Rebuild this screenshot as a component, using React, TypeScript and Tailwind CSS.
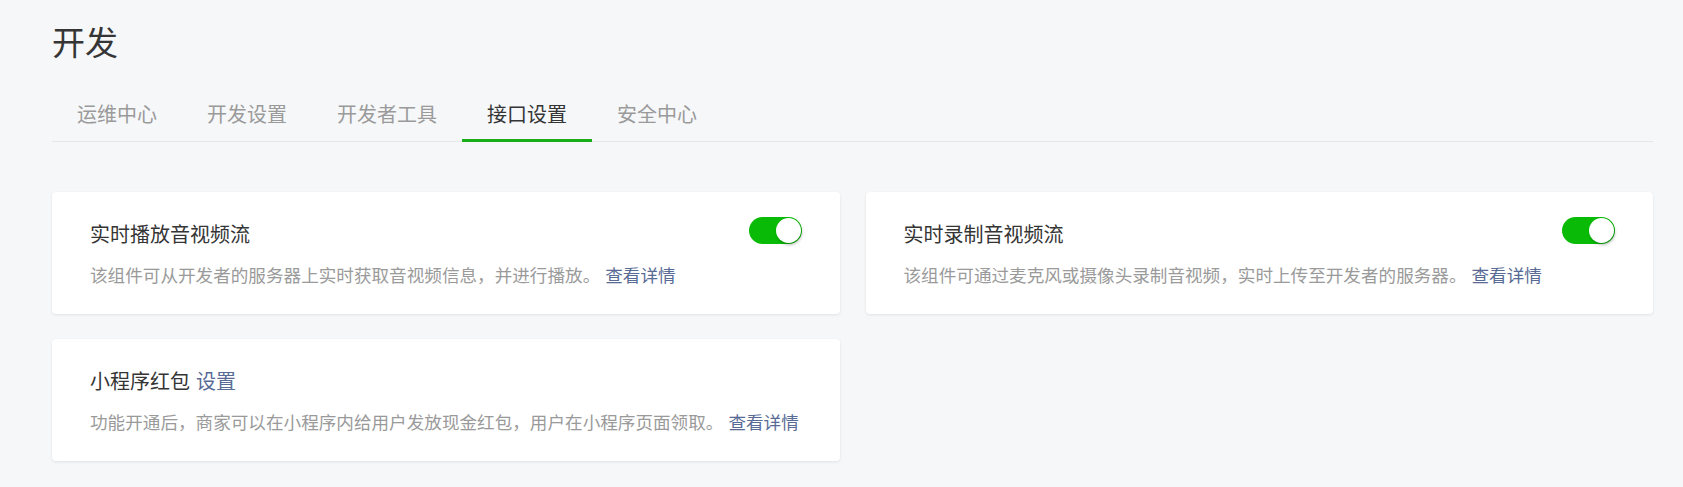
import React from "react";

const FONT = '"Microsoft YaHei", "Noto Sans CJK SC", "Noto Sans", sans-serif';

function Toggle() {
  return (
    <div className="-mt-[3px] flex h-[27px] w-[53px] shrink-0 items-center justify-end rounded-full bg-[#09bb07] p-px">
      <div className="h-[25px] w-[25px] rounded-full bg-white shadow-[1px_2px_3px_rgba(0,0,0,0.25)]" />
    </div>
  );
}

function Card({
  title,
  desc,
  toggle,
  titleLink,
}: {
  title: string;
  desc: string;
  toggle?: boolean;
  titleLink?: string;
}) {
  return (
    <div className="rounded-[4px] bg-white px-[38px] pb-[26px] pt-[28px] shadow-[0_1px_3px_rgba(0,0,0,0.09)]">
      <div className="flex items-start justify-between">
        <div className="text-[20px] leading-[28px] text-[#353535]">
          {title}
          {titleLink && <a className="ml-[6px] text-[#576b95]">{titleLink}</a>}
        </div>
        {toggle && <Toggle />}
      </div>
      <div className="mt-[14px] text-[17.6px] leading-[26px] text-[#9a9a9a]">
        {desc}
        <a className="ml-[5px] text-[#576b95]">查看详情</a>
      </div>
    </div>
  );
}

export default function App() {
  const tabs = ["运维中心", "开发设置", "开发者工具", "接口设置", "安全中心"];
  return (
    <div
      className="min-h-[487px] w-full bg-[#f6f7f9] pb-[25px] pl-[52px] pr-[30px] pt-[19px]"
      style={{ fontFamily: FONT }}
    >
      <h1 className="text-[33px] font-normal leading-[44px] text-[#353535]">开发</h1>
      <div className="mt-[37px] flex border-b border-[#e7e7eb]">
        {tabs.map((t) => {
          const active = t === "接口设置";
          return (
            <div
              key={t}
              className={
                active
                  ? "-mb-px border-b-[3px] border-[#1aad19] px-[25px] pb-[11px] text-[20px] leading-[28px] text-[#353535]"
                  : "-mb-px border-b-[3px] border-transparent px-[25px] pb-[11px] text-[20px] leading-[28px] text-[#9a9a9a]"
              }
            >
              {t}
            </div>
          );
        })}
      </div>
      <div className="mt-[50px] grid grid-cols-2 gap-x-[26px] gap-y-[25px]">
        <Card
          title="实时播放音视频流"
          desc="该组件可从开发者的服务器上实时获取音视频信息，并进行播放。"
          toggle
        />
        <Card
          title="实时录制音视频流"
          desc="该组件可通过麦克风或摄像头录制音视频，实时上传至开发者的服务器。"
          toggle
        />
        <Card
          title="小程序红包"
          titleLink="设置"
          desc="功能开通后，商家可以在小程序内给用户发放现金红包，用户在小程序页面领取。"
        />
      </div>
    </div>
  );
}
